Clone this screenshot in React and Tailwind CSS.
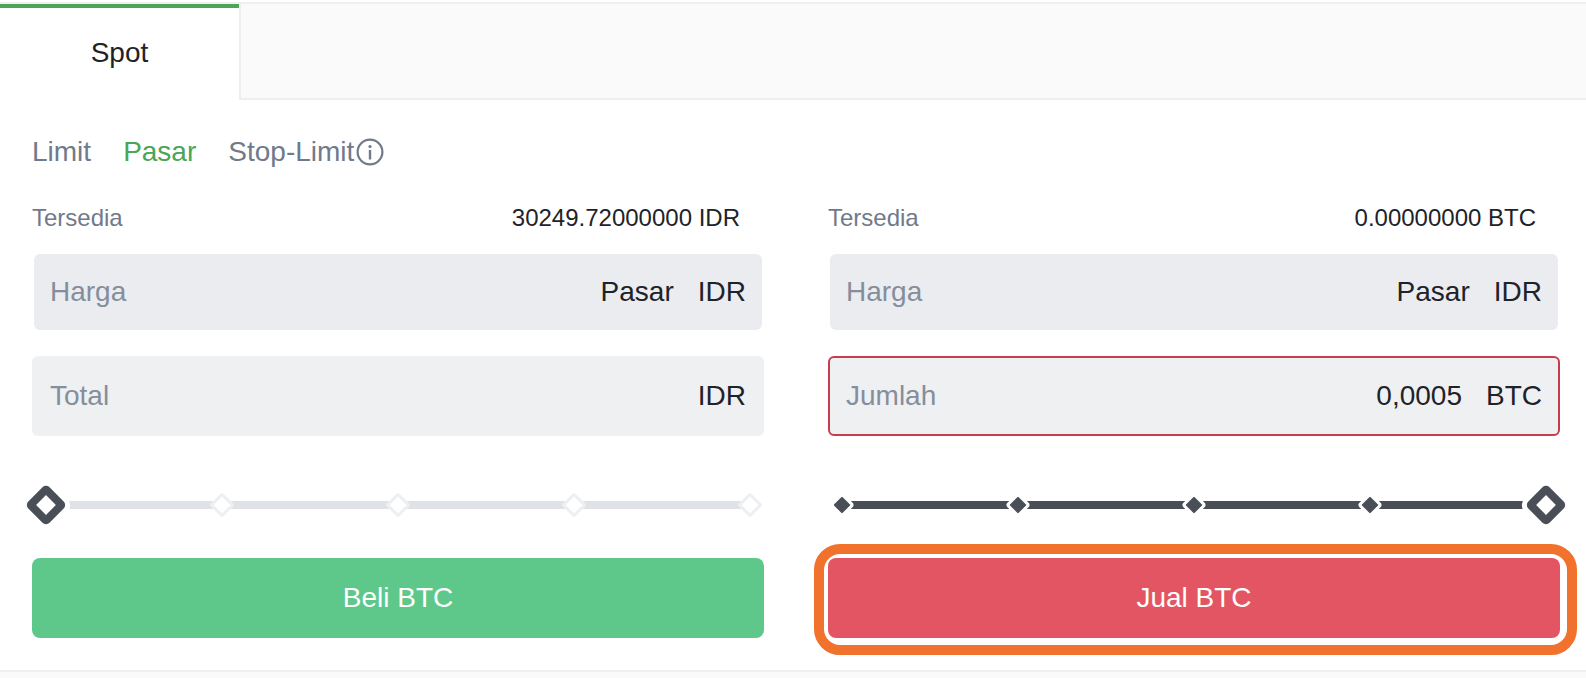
const font = { fontFamily: '"Liberation Sans", Arial, sans-serif' };

function InfoIcon() {
  return (
    <svg width="28" height="28" viewBox="0 0 28 28" fill="none" className="ml-[2px] shrink-0">
      <circle cx="14" cy="14" r="12.4" stroke="#707a8a" strokeWidth="2.2" />
      <circle cx="14" cy="8.5" r="1.6" fill="#707a8a" />
      <path d="M14 12v9.5" stroke="#707a8a" strokeWidth="2.4" />
    </svg>
  );
}

function Field({ label, value, unit, disabled, error }) {
  const box = disabled
    ? "mx-[2px] h-[76px] bg-[#eaecef] border-transparent"
    : error
      ? "h-[80px] bg-[#eff0f2] border-[#c43e4e]"
      : "h-[80px] bg-[#eff0f2] border-transparent";
  return (
    <div className={`flex items-center rounded-[6px] border-2 text-[28px] leading-none ${disabled ? "pl-[14px] pr-[14px]" : "pl-[16px] pr-[16px]"} ${box}`}>
      <span className="text-[#858e9c]">{label}</span>
      <span className="ml-auto text-[#1e2329]">{value}</span>
      <span className="ml-[24px] text-[#1e2329]">{unit}</span>
    </div>
  );
}

function Slider({ filled }) {
  const active = filled ? 4 : 0;
  return (
    <div className="relative mt-[49px] flex h-[40px] items-center justify-between px-[14px]">
      <div className={`absolute inset-x-[14px] top-[16px] h-[8px] ${filled ? "bg-[#4a4f57]" : "bg-[#dfe2e6]"}`} />
      {[0, 1, 2, 3, 4].map((i) => (
        <div key={i} className="relative flex h-0 w-0 items-center justify-center">
          {i === active ? (
            <div className="h-[30px] w-[30px] shrink-0 rotate-45 rounded-[5px] border-[8px] border-[#4a4f57] bg-white shadow-[0_0_0_5px_#ffffff]" />
          ) : filled ? (
            <div className="h-[12px] w-[12px] shrink-0 rotate-45 rounded-[1px] bg-[#4a4f57] shadow-[0_0_0_3px_#ffffff]" />
          ) : (
            <div className="h-[18px] w-[18px] shrink-0 rotate-45 rounded-[2px] border-[3px] border-[#eeeff2] bg-white" />
          )}
        </div>
      ))}
    </div>
  );
}

function Column({ available, priceUnit, second, slider, button }) {
  return (
    <div className="flex flex-col">
      <div className="flex h-[36px] items-center justify-between pr-[24px] text-[24px] leading-none">
        <span className="text-[#707a8a]">Tersedia</span>
        <span className="text-[#1e2329]">{available}</span>
      </div>
      <div className="mt-[18px]">
        <Field label="Harga" value="Pasar" unit={priceUnit} disabled />
      </div>
      <div className="mt-[26px]">{second}</div>
      {slider}
      {button}
    </div>
  );
}

export default function App() {
  return (
    <div className="h-[678px] w-[1586px] overflow-hidden bg-white" style={font}>
      <div className="mt-0 flex h-[100px] flex-col pt-[2px]">
        <div className="flex h-[98px] border-t-2 border-[#f0f0f2]">
          <div className="flex w-[239px] items-center justify-center border-t-4 border-[#4aa657] pb-[2px] text-[28px] leading-none text-[#1e2329]">
            Spot
          </div>
          <div className="flex-1 border-b-2 border-l-2 border-[#eeeef2] bg-[#fafafa]" />
        </div>
      </div>

      <div className="flex h-[100px] items-center gap-[32px] pt-[4px] pl-[32px] text-[28px] leading-none text-[#707a8a]">
        <span>Limit</span>
        <span className="text-[#4aa657]">Pasar</span>
        <span className="flex items-center">
          Stop-Limit
          <InfoIcon />
        </span>
      </div>

      <div className="grid grid-cols-2 gap-x-[64px] pl-[32px] pr-[26px]">
        <Column
          available="30249.72000000 IDR"
          priceUnit="IDR"
          second={<Field label="Total" value="" unit="IDR" />}
          slider={<Slider />}
          button={
            <button className="mt-[33px] h-[80px] rounded-[8px] bg-[#5ec88a] text-[28px] text-white">
              Beli BTC
            </button>
          }
        />
        <Column
          available="0.00000000 BTC"
          priceUnit="IDR"
          second={<Field label="Jumlah" value="0,0005" unit="BTC" error />}
          slider={<Slider filled />}
          button={
            <div className="relative mt-[33px] h-[80px]">
              <button className="h-full w-full rounded-[8px] bg-[#e45563] text-[28px] text-white">
                Jual BTC
              </button>
              <div className="absolute -bottom-[17px] -left-[14px] -right-[17px] -top-[14px] rounded-[26px] border-[10px] border-[#f0722d]" />
            </div>
          }
        />
      </div>

      <div className="mt-[32px] h-[8px] border-t-2 border-[#f0f0f2] bg-[#fafafa]" />
    </div>
  );
}
